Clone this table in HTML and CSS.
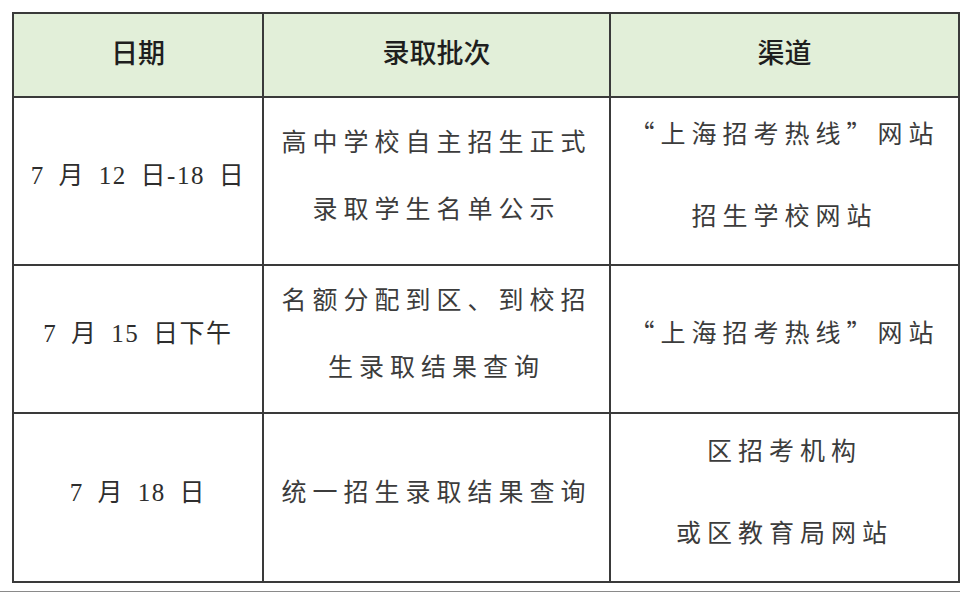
FILE: index.html
```html
<!DOCTYPE html>
<html lang="zh-CN">
<head>
<meta charset="utf-8">
<title>录取结果查询</title>
<link rel="stylesheet" href="styles.css">
</head>
<body>
<div class="page">
  <table class="schedule">
    <colgroup>
      <col class="c-date">
      <col class="c-batch">
      <col class="c-channel">
    </colgroup>
    <thead>
      <tr class="head-row">
        <th>日期</th>
        <th>录取批次</th>
        <th>渠道</th>
      </tr>
    </thead>
    <tbody>
      <tr class="row-1">
        <td class="date">7 月 12 日-18 日</td>
        <td><div class="lines tight"><div>高中学校自主招生正式</div><div>录取学生名单公示</div></div></td>
        <td><div class="lines wide"><div><span class="quote">“</span>上海招考热线<span class="quote">”</span>网站</div><div>招生学校网站</div></div></td>
      </tr>
      <tr class="row-2">
        <td class="date">7 月 15 日下午</td>
        <td><div class="lines tight"><div>名额分配到区、到校招</div><div>生录取结果查询</div></div></td>
        <td><div class="lines"><div><span class="quote">“</span>上海招考热线<span class="quote">”</span>网站</div></div></td>
      </tr>
      <tr class="row-3">
        <td class="date">7 月 18 日</td>
        <td><div class="lines"><div>统一招生录取结果查询</div></div></td>
        <td><div class="lines wide"><div>区招考机构</div><div>或区教育局网站</div></div></td>
      </tr>
    </tbody>
  </table>
  <div class="bottom-rule"></div>
</div>
</body>
</html>
```

FILE: styles.css
```css
html, body {
  margin: 0;
  padding: 0;
  background: #ffffff;
}

.page {
  width: 960px;
  height: 592px;
  padding-top: 12px;
  box-sizing: border-box;
  overflow: hidden;
}

.schedule {
  margin-left: 12px;
  width: 946px;
  border-collapse: collapse;
  table-layout: fixed;
}

.c-date { width: 250px; }
.c-batch { width: 347px; }
.c-channel { width: 349px; }

.schedule th,
.schedule td {
  border: 2px solid #3a3a3a;
  text-align: center;
  vertical-align: middle;
  padding: 0;
}

.head-row th {
  height: 84px;
  background: #e2efd9;
  font-family: "Noto Sans CJK SC", "Noto Sans", sans-serif;
  font-weight: 500;
  font-size: 27px;
  color: #1e1e1e;
  padding-bottom: 8px;
  box-sizing: border-box;
}

.row-1 td { height: 168px; }
.row-2 td { height: 148px; }
.row-3 td { height: 169px; }

.schedule td {
  font-family: "Liberation Serif", "Noto Sans CJK SC", serif;
  font-weight: 400;
  font-size: 25px;
  color: #383838;
  letter-spacing: 6px;
  padding-bottom: 16px;
  box-sizing: border-box;
}

.schedule td.date {
  font-size: 25px;
  letter-spacing: 1.5px;
  word-spacing: 6px;
  color: #2e2e2e;
}

.lines div {
  line-height: 34px;
  font-family: "Noto Sans CJK SC", sans-serif;
  font-weight: 400;
  color: #3c3c3c;
  white-space: nowrap;
}

.lines.tight div + div { margin-top: 33px; }
.lines.wide div + div { margin-top: 48px; }

.quote {
  font-family: "Noto Sans CJK SC", sans-serif;
}

.bottom-rule {
  margin-top: 8px;
  height: 1px;
  background: #8a8a8a;
}
```
